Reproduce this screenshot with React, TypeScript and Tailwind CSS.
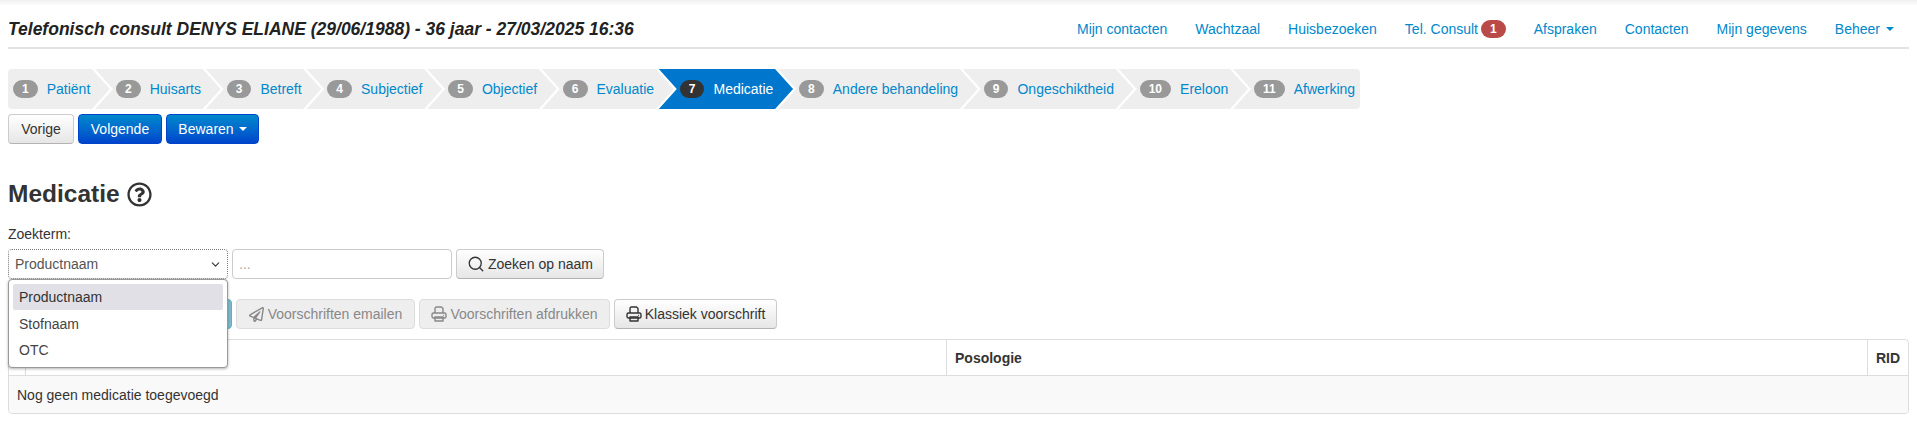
import { Search, ChevronDown } from "lucide-react";
import { FaRegPaperPlane, FaRegQuestionCircle } from "react-icons/fa";

const steps = [
  ["1", "Patiënt"], ["2", "Huisarts"], ["3", "Betreft"], ["4", "Subjectief"], ["5", "Objectief"], ["6", "Evaluatie"],
  ["7", "Medicatie"], ["8", "Andere behandeling"], ["9", "Ongeschiktheid"], ["10", "Ereloon"], ["11", "Afwerking"],
];
const nav = ["Mijn contacten", "Wachtzaal", "Huisbezoeken"];
const nav2 = ["Afspraken", "Contacten", "Mijn gegevens"];

function Caret({ className }: { className: string }) {
  return <span className={`inline-block w-0 h-0 border-x-4 border-x-transparent border-t-4 ${className}`} />;
}

function PrintIcon() {
  return (
    <svg width="16" height="16" viewBox="0 0 16 16" fill="none" stroke="currentColor" strokeWidth="1.4" strokeLinejoin="round">
      <path d="M4 7V2.5A1.5 1.5 0 0 1 5.5 1h5l1.5 1.5V7" />
      <rect x="1" y="7" width="14" height="5" rx="1.5" />
      <rect x="4" y="11" width="8" height="4" />
      <circle cx="12.5" cy="9.3" r="0.6" fill="currentColor" stroke="none" />
    </svg>
  );
}

export default function App() {
  return (
    <div className="relative h-[421px] overflow-hidden bg-white text-[14px] leading-5 text-[#333] font-['Liberation_Sans',Arial,sans-serif]">
      <div className="h-[6px] bg-gradient-to-b from-[#f0f0f0] to-white" />
      <div className="px-2">
        <header className="flex h-[43px] items-center justify-between border-b-2 border-[#e2e2e2] pb-[5px] pt-[10px]">
          <h1 className="text-[17.5px] font-bold italic leading-6 text-[#222]">
            Telefonisch consult DENYS ELIANE (29/06/1988) - 36 jaar - 27/03/2025 16:36
          </h1>
          <nav className="flex items-center text-[#0088cc] pr-[15px]">
            {nav.map((n) => <a key={n} className="mr-[28px]">{n}</a>)}
            <a className="mr-[28px] flex items-center">
              Tel. Consult
              <span className="ml-[3px] rounded-[9px] bg-[#b94a48] px-[9px] text-[12px] font-bold leading-[18px] text-white">1</span>
            </a>
            {nav2.map((n) => <a key={n} className="mr-[28px]">{n}</a>)}
            <a className="flex items-center gap-[6px]">Beheer <Caret className="border-t-[#0088cc]" /></a>
          </nav>
        </header>

        <ol className="mt-[20px] flex h-10 w-fit">
          {steps.map(([n, label], i) => {
            const active = n === "7";
            const first = i === 0;
            const last = i === steps.length - 1;
            return (
              <li
                key={n}
                className={`flex items-center ${first ? "" : "-ml-[15px]"} ${active ? "bg-[#0077cc] text-white" : "bg-[#eeeeee] text-[#0088cc]"} ${
                  first
                    ? "rounded-l-[4px] pl-[5px] pr-[19.7px] [clip-path:polygon(0_0,calc(100%-18px)_0,100%_50%,calc(100%-18px)_100%,0_100%)]"
                    : last
                    ? "rounded-r-[4px] pl-[21px] pr-[5px] [clip-path:polygon(0_0,100%_0,100%_100%,0_100%,18px_50%)]"
                    : "pl-[21px] pr-[19.7px] [clip-path:polygon(0_0,calc(100%-18px)_0,100%_50%,calc(100%-18px)_100%,0_100%,18px_50%)]"
                }`}
              >
                <span className={`mr-[9px] rounded-[9px] px-[9px] text-[12px] font-bold leading-[18px] text-white ${active ? "bg-[#333]" : "bg-[#999]"}`}>{n}</span>
                {label}
              </li>
            );
          })}
        </ol>

        <div className="mt-[5px] flex gap-1">
          <button className="h-[30px] w-[66px] rounded-[4px] border border-[#ccc] border-b-[#b3b3b3] bg-gradient-to-b from-white to-[#e6e6e6] text-[#333]">Vorige</button>
          <button className="h-[30px] w-[84px] rounded-[4px] border border-[#04c] bg-gradient-to-b from-[#08c] to-[#04c] text-white">Volgende</button>
          <button className="flex h-[30px] w-[93px] items-center justify-center gap-[5px] rounded-[4px] border border-[#04c] bg-gradient-to-b from-[#08c] to-[#04c] text-white">Bewaren <Caret className="border-t-white" /></button>
        </div>

        <h2 className="mt-[34px] flex h-8 items-center gap-[7px] text-[24.5px] font-bold leading-8">
          Medicatie <FaRegQuestionCircle size={25} className="text-[#333]" />
        </h2>

        <label className="mt-[14px] block leading-5">Zoekterm:</label>

        <div className="mt-[5px] flex gap-1">
          <div className="relative">
            <div className="flex h-[30px] w-[220px] items-center justify-between rounded-[4px] border border-dotted border-[#777] pl-[6px] pr-[5px] text-[#555]">
              Productnaam <ChevronDown size={13} strokeWidth={2} className="text-[#333]" />
            </div>
            <ul className="absolute left-0 top-[30px] z-10 h-[89px] w-[220px] rounded-[4px] border border-[#999] bg-white p-[4px] pt-[4px] shadow-[0_1px_3px_rgba(0,0,0,0.3)] text-[#333]">
              <li className="flex h-[26px] items-center rounded-[2px] bg-[#e0e0e6] px-[6px]">Productnaam</li>
              <li className="flex h-[27px] items-center px-[6px] text-[#444]">Stofnaam</li>
              <li className="flex h-[26px] items-center px-[6px] text-[#444]">OTC</li>
            </ul>
          </div>
          <input placeholder="..." className="h-[30px] w-[220px] rounded-[4px] border border-[#ccc] px-[6px] text-[14px] placeholder:text-[#aaa] outline-none" />
          <button className="flex h-[30px] w-[148px] items-center justify-center gap-[3px] rounded-[4px] border border-[#ccc] border-b-[#b3b3b3] bg-gradient-to-b from-white to-[#e6e6e6]">
            <Search size={18} strokeWidth={1.75} /> Zoeken op naam
          </button>
        </div>

        <div className="mt-[20px] flex gap-1">
          <button className="h-[30px] w-[224px] rounded-[4px] border border-[#5bb0c6] bg-[#7fbccc]" />
          <button className="flex h-[30px] w-[179px] items-center justify-center gap-1 rounded-[4px] border border-[#ddd] bg-[#eeeeee] text-[#888]">
            <FaRegPaperPlane size={15} /> Voorschriften emailen
          </button>
          <button className="flex h-[30px] w-[191px] items-center justify-center gap-[3px] rounded-[4px] border border-[#ddd] bg-[#eeeeee] text-[#888]">
            <PrintIcon /> Voorschriften afdrukken
          </button>
          <button className="flex h-[30px] w-[163px] items-center justify-center gap-[3px] rounded-[4px] border border-[#ccc] border-b-[#b3b3b3] bg-gradient-to-b from-white to-[#e6e6e6]">
            <PrintIcon /> Klassiek voorschrift
          </button>
        </div>

        <div className="mt-[10px] h-[75px] rounded-[4px] border border-[#ddd]">
          <div className="flex h-9 border-b border-[#ddd] font-bold">
            <div className="w-[17px] border-r border-[#ddd]" />
            <div className="w-[921px] border-r border-[#ddd]" />
            <div className="flex flex-1 items-center border-r border-[#ddd] px-2">Posologie</div>
            <div className="flex w-10 items-center px-2">RID</div>
          </div>
          <div className="flex h-[37px] items-center rounded-b-[4px] bg-[#f9f9f9] px-2">Nog geen medicatie toegevoegd</div>
        </div>
      </div>
    </div>
  );
}
